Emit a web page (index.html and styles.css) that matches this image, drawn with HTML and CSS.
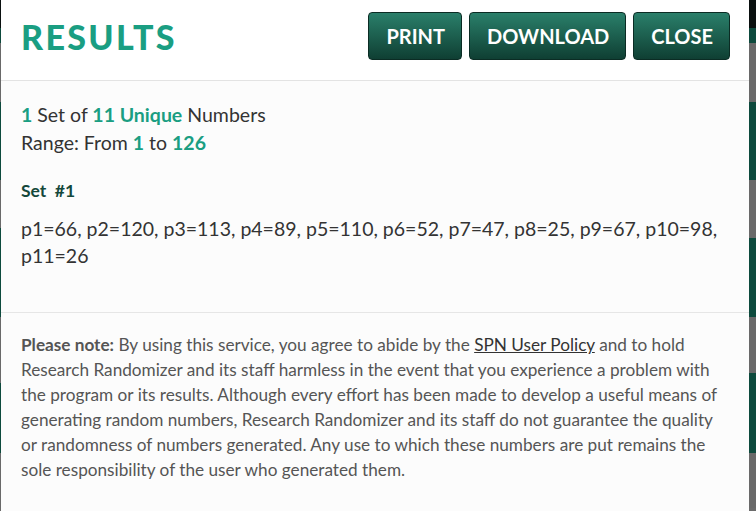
FILE: index.html
```html
<!DOCTYPE html>
<html>
  <link rel="stylesheet" href="styles.css">
  <meta name="viewport" content="width=device-width, initial-scale=1.0">
  <title>Research Randomizer - Results</title>
  <body>
    <div class="page">
      <div class="edge edge-left">
        <div class="band dark" style="height:28px"></div>
        <div class="band green" style="height:15px"></div>
        <div class="band grey" style="height:59px"></div>
        <div class="band green" style="height:78px"></div>
        <div class="band grey" style="height:48px"></div>
        <div class="band green" style="height:89px"></div>
        <div class="band grey" style="height:66px"></div>
        <div class="band green" style="height:70px"></div>
        <div class="band grey" style="height:58px"></div>
      </div>

      <div class="modal">
        <div class="modal-header">
          <h2 class="title">RESULTS</h2>
          <div class="actions">
            <button type="button" class="button">PRINT</button>
            <button type="button" class="button">DOWNLOAD</button>
            <button type="button" class="button">CLOSE</button>
          </div>
        </div>

        <div class="modal-body">
          <p class="summary"><b>1</b> Set of <b>11 Unique</b> Numbers<br>
            Range: From <b>1</b> to <b>126</b></p>
          <h4 class="set-title">Set &nbsp;#1</h4>
          <p class="numbers">p1=66, p2=120, p3=113, p4=89, p5=110, p6=52, p7=47, p8=25, p9=67, p10=98, p11=26</p>
        </div>

        <div class="modal-footer">
          <p><b>Please note:</b> By using this service, you agree to abide by the <a href="#">SPN User Policy</a> and to hold
            Research Randomizer and its staff harmless in the event that you experience a problem with
            the program or its results. Although every effort has been made to develop a useful means of
            generating random numbers, Research Randomizer and its staff do not guarantee the quality
            or randomness of numbers generated. Any use to which these numbers are put remains the
            sole responsibility of the user who generated them.</p>
        </div>
      </div>

      <div class="edge edge-right">
        <div class="band dark" style="height:28px"></div>
        <div class="band green" style="height:15px"></div>
        <div class="band grey" style="height:59px"></div>
        <div class="band green" style="height:78px"></div>
        <div class="band grey" style="height:58px"></div>
        <div class="band green" style="height:79px"></div>
        <div class="band grey" style="height:56px"></div>
        <div class="band green" style="height:80px"></div>
        <div class="band grey" style="height:55px"></div>
      </div>
    </div>
  </body>
</html>
```

FILE: styles.css
```css
  html, body {
    margin: 0;
    padding: 0;
    background: #6b6b6b;
  }

  .page {
    display: flex;
    width: 756px;
    height: 511px;
    overflow: hidden;
  }

  .edge {
    display: flex;
    flex-direction: column;
    flex-shrink: 0;
  }

  .edge-left { width: 1px; }
  .edge-right { width: 7px; }

  .band { flex-shrink: 0; }
  .dark { background: #0a100f; }
  .green { background: #0d4a3d; }
  .grey { background: #696969; }

  .modal {
    width: 748px;
    flex-shrink: 0;
    background: #fcfcfc;
    font-family: Lato, "Open Sans", Arial, sans-serif;
    color: #333;
  }

  .modal-header {
    display: flex;
    align-items: center;
    justify-content: space-between;
    height: 80px;
    padding: 0 19px 0 20px;
    background: #fff;
    border-bottom: 1px solid #e3e3e3;
  }

  .title {
    margin: -7px 0 0 0;
    font-family: Lato, sans-serif;
    font-weight: 900;
    font-size: 34px;
    letter-spacing: 2.3px;
    color: #1a9e82;
  }

  .actions {
    display: flex;
    gap: 7px;
    margin-top: -9px;
  }

  .button {
    height: 48px;
    padding: 0 16px 0 17px;
    font-family: Lato, sans-serif;
    font-weight: 700;
    font-size: 20px;
    color: #fff;
    background: linear-gradient(#2a7f6a, #0f3f33);
    border: 1px solid #0b2c24;
    border-radius: 4px;
    cursor: pointer;
  }

  .modal-body {
    padding: 20px 20px 43px 20px;
    border-bottom: 1px solid #e6e6e6;
  }

  .summary {
    margin: 0;
    font-size: 19.5px;
    line-height: 28px;
  }

  .summary b {
    color: #1a9e82;
  }

  .set-title {
    margin: 23px 0 13px 0;
    font-size: 17.5px;
    line-height: 22px;
    color: #14483b;
  }

  .numbers {
    margin: 0;
    font-size: 19.5px;
    line-height: 27px;
  }

  .modal-footer {
    padding: 19px 20px 20px 20px;
    color: #555;
  }

  .modal-footer p {
    margin: 0;
    font-size: 17.2px;
    line-height: 25px;
  }

  .modal-footer a {
    color: #333;
  }
```
